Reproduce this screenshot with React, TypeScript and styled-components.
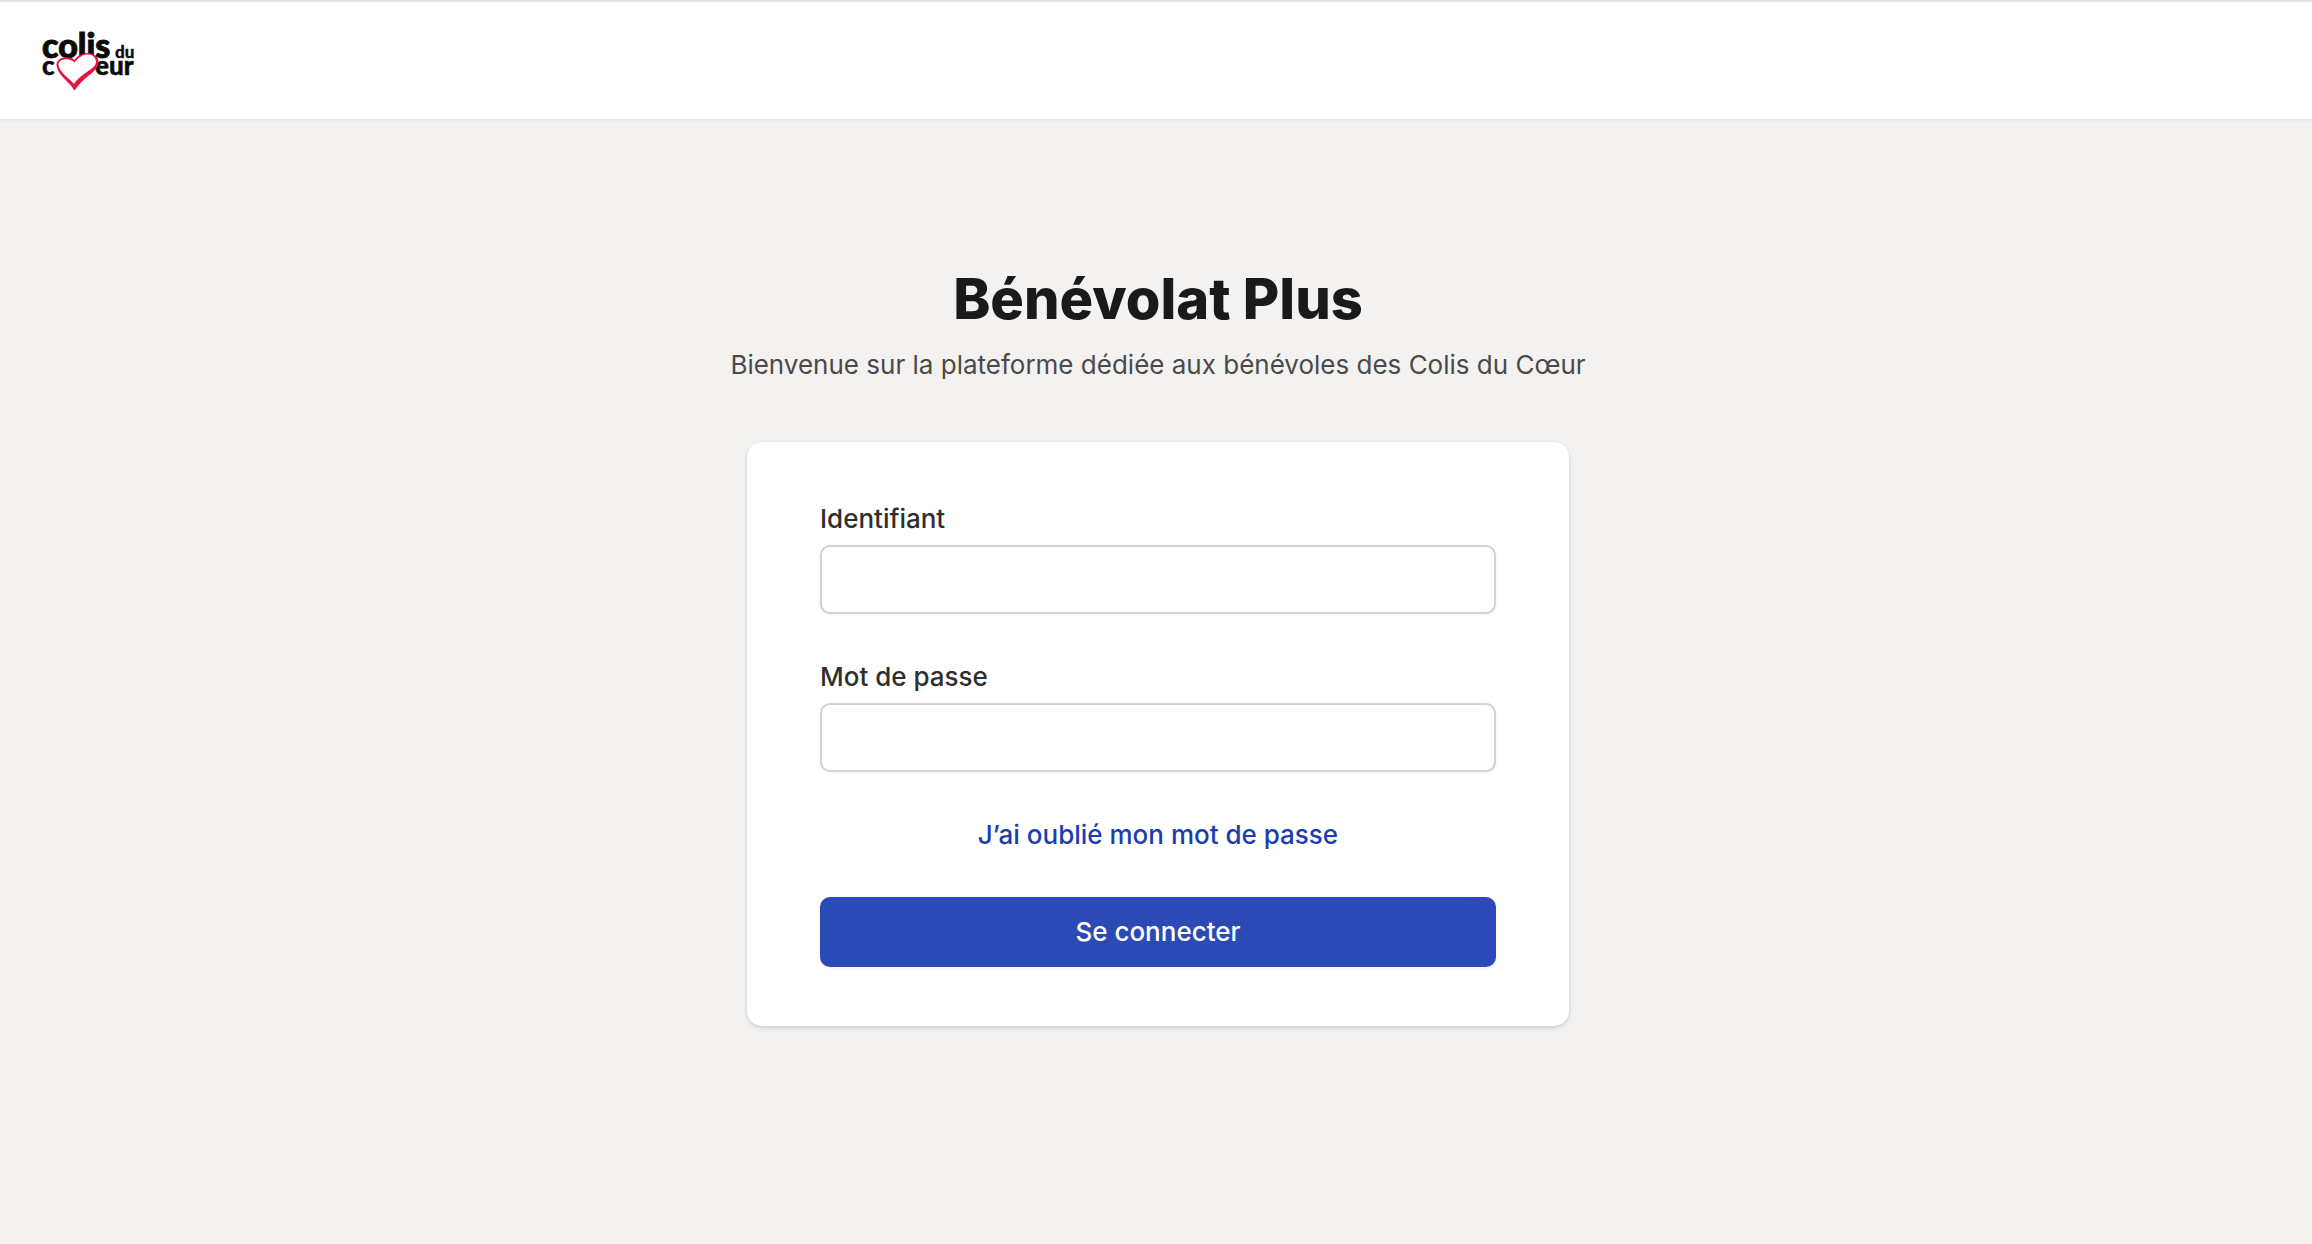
import { useId } from "react";
import type { FormEvent } from "react";
import styled, { createGlobalStyle } from "styled-components";

const GlobalStyle = createGlobalStyle`
  *, *::before, *::after { box-sizing: border-box; }
  html, body, #root { height: 100%; }
  body {
    margin: 0;
    background: #f3f2f0;
    color: #1a1a1a;
    font-family: Inter, "Liberation Sans", sans-serif;
    font-size: 26px;
    line-height: 36px;
  }
`;

const Page = styled.div`
  display: flex;
  flex-direction: column;
  min-height: 100%;
`;

const Header = styled.header`
  display: flex;
  align-items: flex-start;
  height: 119px;
  padding: 28px 40px;
  background: #ffffff;
  border-top: 2px solid #e1e1e1;
  box-shadow: 0 1px 4px rgba(0, 0, 0, 0.08);
`;

const HomeLink = styled.a`
  display: block;
`;

const LogoSvg = styled.svg`
  display: block;
  width: 100px;
  height: 62px;
  overflow: visible;
`;

const Main = styled.main`
  display: flex;
  flex-direction: column;
  align-items: center;
  padding: 150px 0 60px 4px;
`;

const Title = styled.h1`
  margin: 0 0 18px;
  font-size: 56px;
  line-height: 60px;
  font-weight: 800;
`;

const Subtitle = styled.p`
  margin: 0 0 59px;
  color: #4b4a4a;
`;

const Card = styled.form`
  display: flex;
  flex-direction: column;
  gap: 45px;
  width: 100%;
  max-width: 822px;
  padding: 59px 73px;
  background: #ffffff;
  border-radius: 15px;
  box-shadow: 0 2px 5px rgba(0, 0, 0, 0.12), 0 1px 3px rgba(0, 0, 0, 0.06);
`;

const FieldGroup = styled.div`
  display: flex;
  flex-direction: column;
  gap: 8px;
`;

const Label = styled.label`
  font-weight: 500;
  color: #2f2e2e;
`;

const Input = styled.input`
  width: 100%;
  height: 69px;
  padding: 0 18px;
  font: inherit;
  color: inherit;
  background: #ffffff;
  border: 2px solid #d2d2d2;
  border-radius: 10px;
  box-shadow: 0 1px 3px rgba(0, 0, 0, 0.06);
`;

const ForgotLink = styled.a`
  align-self: center;
  line-height: 35px;
  font-weight: 500;
  color: #1a3eb1;
  text-decoration: none;
`;

const SubmitButton = styled.button`
  width: 100%;
  height: 70px;
  font: inherit;
  font-weight: 500;
  color: #ffffff;
  background: #2b4ab5;
  border: 0;
  border-radius: 10px;
  box-shadow: 0 1px 3px rgba(0, 0, 0, 0.06);
  cursor: pointer;
`;

function Logo() {
  return (
    <LogoSvg viewBox="0 0 100 62" role="img" aria-label="Colis du cœur">
      <g fontFamily="Lato, sans-serif" fontWeight="900" fill="#0c0c0c" stroke="#0c0c0c">
        <text x="2" y="28" fontSize="34" strokeWidth="1">colis</text>
        <text x="75" y="28" fontSize="17" strokeWidth="0.3">du</text>
        <text x="2" y="45" fontSize="26" strokeWidth="0.5">c</text>
        <text x="55" y="45" fontSize="26" strokeWidth="0.5">eur</text>
      </g>
      <path
        d="M34.500 30 C38 25 43 23 48 23 C54 23 58.500 27 58.500 32 C58.500 42 45 45 35 60 L34 60 C30 52 17 45 16.500 35 C16 27 30 25 34.500 30 Z"
        fill="#e5133f"
      />
      <path
        d="M34.500 32.500 C39 27 43 24.500 48 24.500 C53 24.500 56 28 56 32 C56 39 41 43 34 54 C29 48 19 42 18.500 35 C18 29 29 27 34.500 32.500 Z"
        fill="#ffffff"
      />
    </LogoSvg>
  );
}

function Field({ label, type, name, autoComplete }: { label: string; type: string; name: string; autoComplete: string }) {
  const id = useId();
  return (
    <FieldGroup>
      <Label htmlFor={id}>{label}</Label>
      <Input id={id} type={type} name={name} autoComplete={autoComplete} />
    </FieldGroup>
  );
}

export default function App() {
  const handleSubmit = (event: FormEvent) => event.preventDefault();
  return (
    <>
      <GlobalStyle />
      <Page>
        <Header>
          <HomeLink href="#">
            <Logo />
          </HomeLink>
        </Header>
        <Main>
          <Title>Bénévolat Plus</Title>
          <Subtitle>Bienvenue sur la plateforme dédiée aux bénévoles des Colis du Cœur</Subtitle>
          <Card onSubmit={handleSubmit}>
            <Field label="Identifiant" type="text" name="username" autoComplete="username" />
            <Field label="Mot de passe" type="password" name="password" autoComplete="current-password" />
            <ForgotLink href="#">J’ai oublié mon mot de passe</ForgotLink>
            <SubmitButton type="submit">Se connecter</SubmitButton>
          </Card>
        </Main>
      </Page>
    </>
  );
}
